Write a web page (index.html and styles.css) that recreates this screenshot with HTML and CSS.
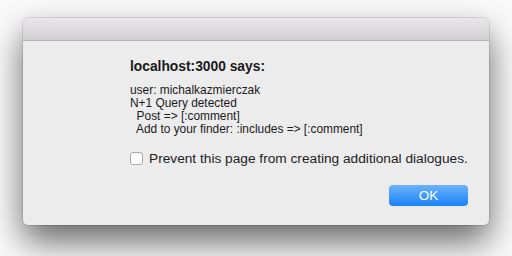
FILE: index.html
```html
<!DOCTYPE html>
<html lang="en">
<head>
    <meta charset="UTF-8">
    <title>localhost:3000 says</title>
    <link rel="stylesheet" href="styles.css">
</head>
<body>
    <div class="dialog">
        <div class="dialog-titlebar"></div>
        <div class="dialog-body">
            <h1 class="dialog-title">localhost:3000 says:</h1>
            <pre class="dialog-message">user: michalkazmierczak
N+1 Query detected
  Post =&gt; [:comment]
  Add to your finder: :includes =&gt; [:comment]</pre>
            <label class="dialog-check">
                <span class="checkbox"></span>
                <span>Prevent this page from creating additional dialogues.</span>
            </label>
            <div class="dialog-actions">
                <button class="btn-ok">OK</button>
            </div>
        </div>
    </div>
</body>
</html>
```

FILE: styles.css
```css
/* Base */
* {
    margin: 0;
    padding: 0;
    box-sizing: border-box;
}

body {
    font-family: 'Liberation Sans', Arial, sans-serif;
    background: #fafafa;
    color: #1a1a1a;
    width: 512px;
    height: 256px;
    overflow: hidden;
    padding: 18px 23px 0;
}

/* Dialog window */
.dialog {
    width: 466px;
    height: 207px;
    background: #ececec;
    border-radius: 5px;
    box-shadow: 0 0 0 1px rgba(0,0,0,0.1), 0 16px 34px rgba(0,0,0,0.6);
    overflow: hidden;
    display: flex;
    flex-direction: column;
}

.dialog-titlebar {
    height: 23px;
    background: linear-gradient(#e8e6e8, #d2d0d2);
    border-bottom: 1px solid #b3b1b3;
}

.dialog-body {
    flex: 1;
    padding: 18px 21px 0 107px;
}

.dialog-title {
    font-size: 13.8px;
    font-weight: bold;
    margin-bottom: 10px;
}

.dialog-message {
    font-family: 'Liberation Sans', Arial, sans-serif;
    font-size: 11.9px;
    line-height: 13px;
    white-space: pre;
    margin-bottom: 15px;
}

.dialog-check {
    display: flex;
    align-items: center;
    gap: 6px;
    font-size: 13.7px;
    color: #222;
}

.checkbox {
    width: 13px;
    height: 13px;
    background: #fff;
    border: 1px solid #a9a9a9;
    border-radius: 3px;
}

.dialog-actions {
    display: flex;
    justify-content: flex-end;
    margin-top: 19px;
}

.btn-ok {
    width: 79px;
    height: 21px;
    border: none;
    border-radius: 4px;
    background: linear-gradient(#6cb3fa, #1a82fb);
    color: #fff;
    font-family: 'Liberation Sans', Arial, sans-serif;
    font-size: 13.5px;
}
```
